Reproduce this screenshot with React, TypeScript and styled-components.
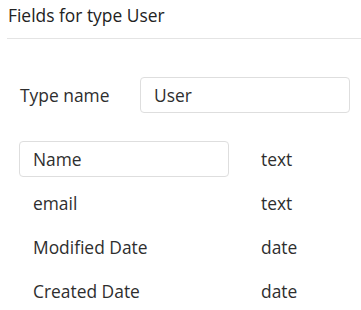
import styled, { createGlobalStyle } from 'styled-components'

type Field = {
  name: string
  type: string
  editing?: boolean
}

const fields: Field[] = [
  { name: 'Name', type: 'text', editing: true },
  { name: 'email', type: 'text' },
  { name: 'Modified Date', type: 'date' },
  { name: 'Created Date', type: 'date' },
]

const GlobalStyle = createGlobalStyle`
  body {
    margin: 0;
    background: #ffffff;
    font-family: "Open Sans", "Noto Sans", sans-serif;
    font-size: 17.4px;
    color: #2e2e2e;
  }
`

const Panel = styled.div`
  width: 361px;
  height: 310px;
  overflow: hidden;
`

const Header = styled.div`
  margin-left: 7px;
  padding: 4px 0 11px 1px;
  line-height: 23px;
  color: #222222;
  border-bottom: 1px solid #e4e4e4;
`

const Body = styled.div`
  padding: 38px 11px 0 19px;
  display: flex;
  flex-direction: column;
`

const TypeRow = styled.div`
  display: grid;
  grid-template-columns: 121px 210px;
  align-items: center;
  height: 36px;
  margin-bottom: 28px;
`

const Label = styled.span`
  padding-left: 1px;
  line-height: 23px;
`

const Input = styled.input`
  box-sizing: border-box;
  width: 210px;
  height: 36px;
  padding: 0 13px;
  border: 1px solid #dedede;
  border-radius: 4px;
  font-family: inherit;
  font-size: inherit;
  color: inherit;
  background: #ffffff;
  outline: none;
`

const FieldList = styled.div`
  display: flex;
  flex-direction: column;
  gap: 8px;
`

const FieldRow = styled.div`
  display: grid;
  grid-template-columns: 210px 1fr;
  column-gap: 32px;
  align-items: center;
  height: 36px;
`

const FieldName = styled.span`
  padding-left: 14px;
  line-height: 23px;
`

const FieldType = styled.span`
  line-height: 23px;
`

export default function App() {
  return (
    <>
      <GlobalStyle />
      <Panel>
        <Header>Fields for type User</Header>
        <Body>
          <TypeRow>
            <Label>Type name</Label>
            <Input defaultValue="User" />
          </TypeRow>
          <FieldList>
            {fields.map((field) => (
              <FieldRow key={field.name}>
                {field.editing ? <Input defaultValue={field.name} /> : <FieldName>{field.name}</FieldName>}
                <FieldType>{field.type}</FieldType>
              </FieldRow>
            ))}
          </FieldList>
        </Body>
      </Panel>
    </>
  )
}
